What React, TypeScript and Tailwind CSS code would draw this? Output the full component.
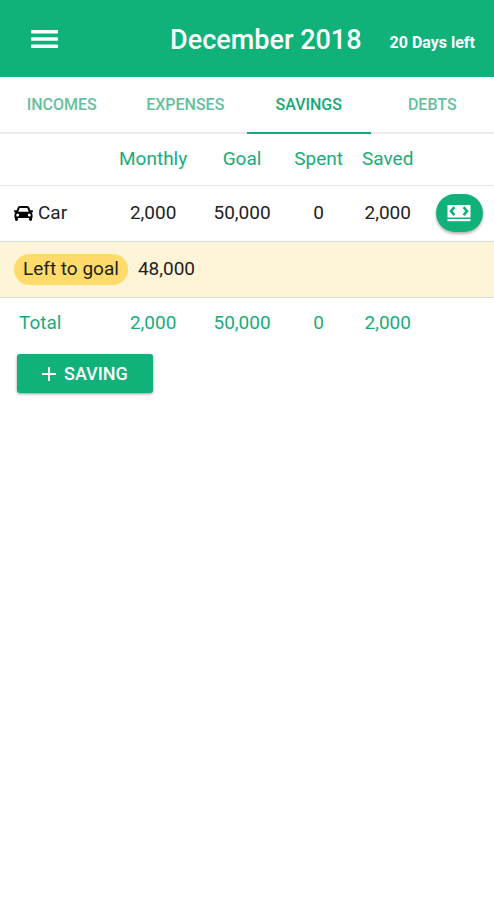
import { useState } from "react";

const tabs = ["Incomes", "Expenses", "Savings", "Debts"];

const savings = [
  { name: "Car", monthly: 2000, goal: 50000, spent: 0, saved: 2000 },
];

const fmt = (n: number) => n.toLocaleString("en-US");

const sum = (key: "monthly" | "goal" | "spent" | "saved") =>
  savings.reduce((total, s) => total + s[key], 0);

const MenuIcon = () => (
  <svg viewBox="0 0 27 18" className="h-[18px] w-[27px]" fill="currentColor" aria-hidden="true">
    <rect y="0" width="27" height="3.4" rx="0.6" />
    <rect y="7.3" width="27" height="3.4" rx="0.6" />
    <rect y="14.6" width="27" height="3.4" rx="0.6" />
  </svg>
);

const CarIcon = () => (
  <svg viewBox="0 0 19 15" className="h-[15px] w-[19px]" fill="#000" aria-hidden="true">
    <path
      fillRule="evenodd"
      d="M6 0h7c1.2 0 2 .7 2.4 1.8L16.300 4.300h1.900c.5 0 .8.3.8.7v.6c0 .5-.3.8-.8.8h-.7c.6.500 1 1.200 1 2v3.600h-.5v1.600c0 .8-.6 1.400-1.400 1.400s-1.500-.6-1.500-1.400V12H3.900v1.600c0 .8-.7 1.400-1.500 1.400S1 14.400 1 13.600V12H.5V8.400c0-.8.4-1.500 1-2H.8C.3 6.400 0 6.100 0 5.600V5c0-.4.3-.7.8-.7h1.900l.9-2.500C4 .7 4.800 0 6 0zM6.200 2c-.4 0-.7.2-.8.6L4.300 5.800h10.400l-1.100-3.200c-.1-.4-.4-.6-.8-.6zM3.700 7.500a1.500 1.500 0 1 0 0 3 1.500 1.500 0 0 0 0-3zM15.300 7.500a1.500 1.500 0 1 0 0 3 1.500 1.500 0 0 0 0-3z"
    />
  </svg>
);

const CashIcon = () => (
  <svg viewBox="0 0 24 18" className="h-[18px] w-6" aria-hidden="true">
    <path fill="#fff" d="M0.5 1h23v12.5h-23z" />
    <path
      fill="none"
      stroke="#10b27a"
      strokeWidth="2.6"
      d="M7.4 3.2L4 7.2l3.400 4M16.600 3.200l3.400 4-3.400 4"
    />
    <path fill="#fff" d="M0.5 15h23v2.200h-23z" />
  </svg>
);

const PlusIcon = () => (
  <svg viewBox="0 0 14 14" className="size-[14px]" stroke="currentColor" strokeWidth="1.8" aria-hidden="true">
    <path d="M7 0v14M0 7h14" />
  </svg>
);

export default function App() {
  const [active, setActive] = useState("Savings");

  return (
    <div className="min-h-screen bg-white font-[Roboto,sans-serif] text-[19px] leading-6 text-[#222]">
      <header className="flex h-[77px] items-center bg-[#10b27a] pr-[19px] pl-[31px] text-white">
        <button aria-label="Open menu">
          <MenuIcon />
        </button>
        <h1 className="ml-auto pt-[2px] text-[27px] leading-8 font-medium">December 2018</h1>
        <span className="mt-2 ml-7 text-base font-bold">20 Days left</span>
      </header>

      <nav className="grid grid-cols-4 border-b-2 border-[#ebebeb]">
        {tabs.map((tab) => (
          <button
            key={tab}
            onClick={() => setActive(tab)}
            className={`-mb-[2px] h-[57px] border-b-2 text-base font-medium uppercase ${
              active === tab
                ? "border-[#18a878] text-[#18a878]"
                : "border-transparent text-[#66c09e]"
            }`}
          >
            {tab}
          </button>
        ))}
      </nav>

      <table className="w-full table-fixed border-collapse text-center">
        <thead>
          <tr className="h-[51px] border-b border-[#dfe8e6] text-[#1aab7b]">
            <th className="w-[22%]" aria-label="Name"></th>
            <th className="w-[18%] font-normal">Monthly</th>
            <th className="w-[18%] font-normal">Goal</th>
            <th className="w-[13%] font-normal">Spent</th>
            <th className="w-[15%] font-normal">Saved</th>
            <th className="w-[14%]" aria-label="Actions"></th>
          </tr>
        </thead>
        {savings.map((s) => (
          <tbody key={s.name}>
            <tr className="h-14 border-b border-[#cfe3d8]">
              <td className="pl-[14px] text-left">
                <span className="flex items-center gap-[5px]">
                  <CarIcon />
                  {s.name}
                </span>
              </td>
              <td>{fmt(s.monthly)}</td>
              <td>{fmt(s.goal)}</td>
              <td>{fmt(s.spent)}</td>
              <td>{fmt(s.saved)}</td>
              <td>
                <button
                  aria-label={`Pay into ${s.name}`}
                  className="mx-auto flex h-[38px] w-[47px] items-center justify-center rounded-full bg-[#10b27a] shadow-[0_2px_3px_rgba(0,0,0,0.3)]"
                >
                  <CashIcon />
                </button>
              </td>
            </tr>
            <tr className="h-14 border-b border-[#cfe3d8] bg-[#fef4d8]">
              <td colSpan={6} className="pl-[14px] text-left">
                <span className="mr-[10px] inline-block rounded-full bg-[#fedb6b] px-[9px] pt-[3px] pb-1">
                  Left to goal
                </span>
                {fmt(s.goal - s.saved)}
              </td>
            </tr>
          </tbody>
        ))}
        <tfoot>
          <tr className="h-[51px] text-[#1aab7b]">
            <td className="pl-[19px] text-left">Total</td>
            <td>{fmt(sum("monthly"))}</td>
            <td>{fmt(sum("goal"))}</td>
            <td>{fmt(sum("spent"))}</td>
            <td>{fmt(sum("saved"))}</td>
            <td></td>
          </tr>
        </tfoot>
      </table>

      <button className="mt-[6px] ml-[17px] flex h-[39px] items-center gap-2 rounded-[3px] bg-[#10b27a] px-[25px] text-lg font-medium text-white uppercase shadow-[0_1px_3px_rgba(0,0,0,0.4)]">
        <PlusIcon />
        Saving
      </button>
    </div>
  );
}
